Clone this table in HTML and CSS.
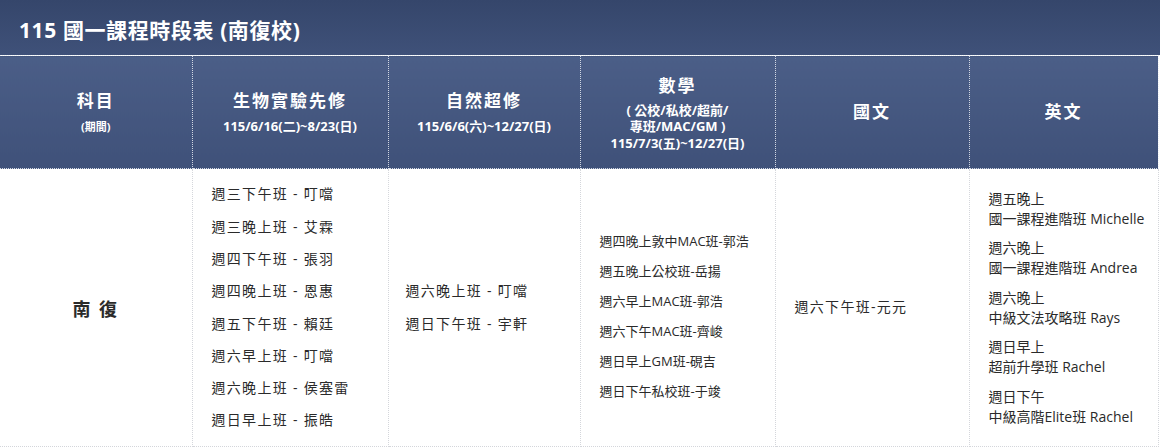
FILE: index.html
```html
<!DOCTYPE html>
<html lang="zh-Hant">
<head>
<meta charset="utf-8">
<title>115 國一課程時段表 (南復校)</title>
<link rel="stylesheet" href="styles.css">
</head>
<body>
<div class="panel">
  <div class="title">115 國一課程時段表 (南復校)</div>
  <table class="sched">
    <colgroup>
      <col class="c1"><col class="c2"><col class="c3"><col class="c4"><col class="c5"><col class="c6">
    </colgroup>
    <thead>
      <tr>
        <th><div class="h-main">科目</div><div class="h-sub small">(期間)</div></th>
        <th><div class="h-main">生物實驗先修</div><div class="h-sub">115/6/16(二)~8/23(日)</div></th>
        <th><div class="h-main">自然超修</div><div class="h-sub">115/6/6(六)~12/27(日)</div></th>
        <th><div class="h-main math">數學</div><div class="h-sub tight">( 公校/私校/超前/<br>專班/MAC/GM )<br>115/7/3(五)~12/27(日)</div></th>
        <th><div class="h-main">國文</div></th>
        <th><div class="h-main">英文</div></th>
      </tr>
    </thead>
    <tbody>
      <tr>
        <td class="campus">南 復</td>
        <td class="list">
          <div>週三下午班 - 叮噹</div>
          <div>週三晚上班 - 艾霖</div>
          <div>週四下午班 - 張羽</div>
          <div>週四晚上班 - 恩惠</div>
          <div>週五下午班 - 賴廷</div>
          <div>週六早上班 - 叮噹</div>
          <div>週六晚上班 - 侯塞雷</div>
          <div>週日早上班 - 振皓</div>
        </td>
        <td class="list nat">
          <div>週六晚上班 - 叮噹</div>
          <div>週日下午班 - 宇軒</div>
        </td>
        <td class="list math-list">
          <div>週四晚上敦中MAC班-郭浩</div>
          <div>週五晚上公校班-岳揚</div>
          <div>週六早上MAC班-郭浩</div>
          <div>週六下午MAC班-齊峻</div>
          <div>週日早上GM班-硯吉</div>
          <div>週日下午私校班-于竣</div>
        </td>
        <td class="list chi">
          <div>週六下午班-元元</div>
        </td>
        <td class="list eng">
          <div class="grp">週五晚上<br>國一課程進階班 Michelle</div>
          <div class="grp">週六晚上<br>國一課程進階班 Andrea</div>
          <div class="grp">週六晚上<br>中級文法攻略班 Rays</div>
          <div class="grp">週日早上<br>超前升學班 Rachel</div>
          <div class="grp">週日下午<br>中級高階Elite班 Rachel</div>
        </td>
      </tr>
    </tbody>
  </table>
</div>
</body>
</html>
```

FILE: styles.css
```css
* { box-sizing: border-box; }
html, body {
  margin: 0;
  padding: 0;
  background: #ffffff;
}
body {
  font-family: "Open Sans", "Noto Sans CJK TC", sans-serif;
  color: #2a2a2a;
  width: 1160px;
  height: 448px;
  overflow: hidden;
}
.panel {
  width: 1160px;
}
.title {
  height: 55px;
  display: flex;
  align-items: center;
  padding-left: 19px;
  padding-top: 2px;
  color: #ffffff;
  font-size: 21px;
  letter-spacing: 0.6px;
  font-weight: 700;
  background: linear-gradient(#35466b, #3f5179);
}
.sched {
  width: 1158px;
  table-layout: fixed;
  border-collapse: collapse;
}
.c1 { width: 192px; }
.c2 { width: 196px; }
.c3 { width: 192px; }
.c4 { width: 195px; }
.c5 { width: 194px; }
.c6 { width: 189px; }
.sched thead tr { height: 113px; }
.sched th {
  background: linear-gradient(#4b5e87, #3f5179);
  color: #ffffff;
  border: 1px dotted rgba(235, 238, 245, 0.85);
  text-align: center;
  vertical-align: middle;
  padding: 0 4px;
  font-weight: 700;
}
.sched th:first-child { border-left: none; }
.h-main {
  font-size: 17px;
  letter-spacing: 2px;
  line-height: 26px;
}
.h-main.math { margin-bottom: 3px; }
.h-sub {
  font-size: 13px;
  line-height: 20px;
  margin-top: 2px;
}
.h-sub.small { font-size: 11px; margin-top: 3px; }
.h-sub.tight { line-height: 16.5px; margin-top: 0; }
.sched tbody tr { height: 278px; }
.sched td {
  border: 1px dotted #d4d6db;
  vertical-align: middle;
  padding: 0;
}
.sched td:first-child { border-left: none; }
.campus {
  text-align: center;
  font-size: 18px;
  font-weight: 700;
  letter-spacing: 2px;
  color: #2a2a2a;
}
.list {
  padding-left: 19px !important;
  font-size: 14px;
  letter-spacing: 1.3px;
  line-height: 32.3px;
}
.nat { padding-left: 17px !important; }
.math-list {
  font-size: 13px;
  letter-spacing: 0;
  line-height: 30px;
  padding-top: 16px !important;
}
.eng {
  font-size: 14px;
  letter-spacing: 0;
  line-height: 20px;
  padding-left: 19px !important;
}
.grp + .grp { margin-top: 9.5px; }
```
